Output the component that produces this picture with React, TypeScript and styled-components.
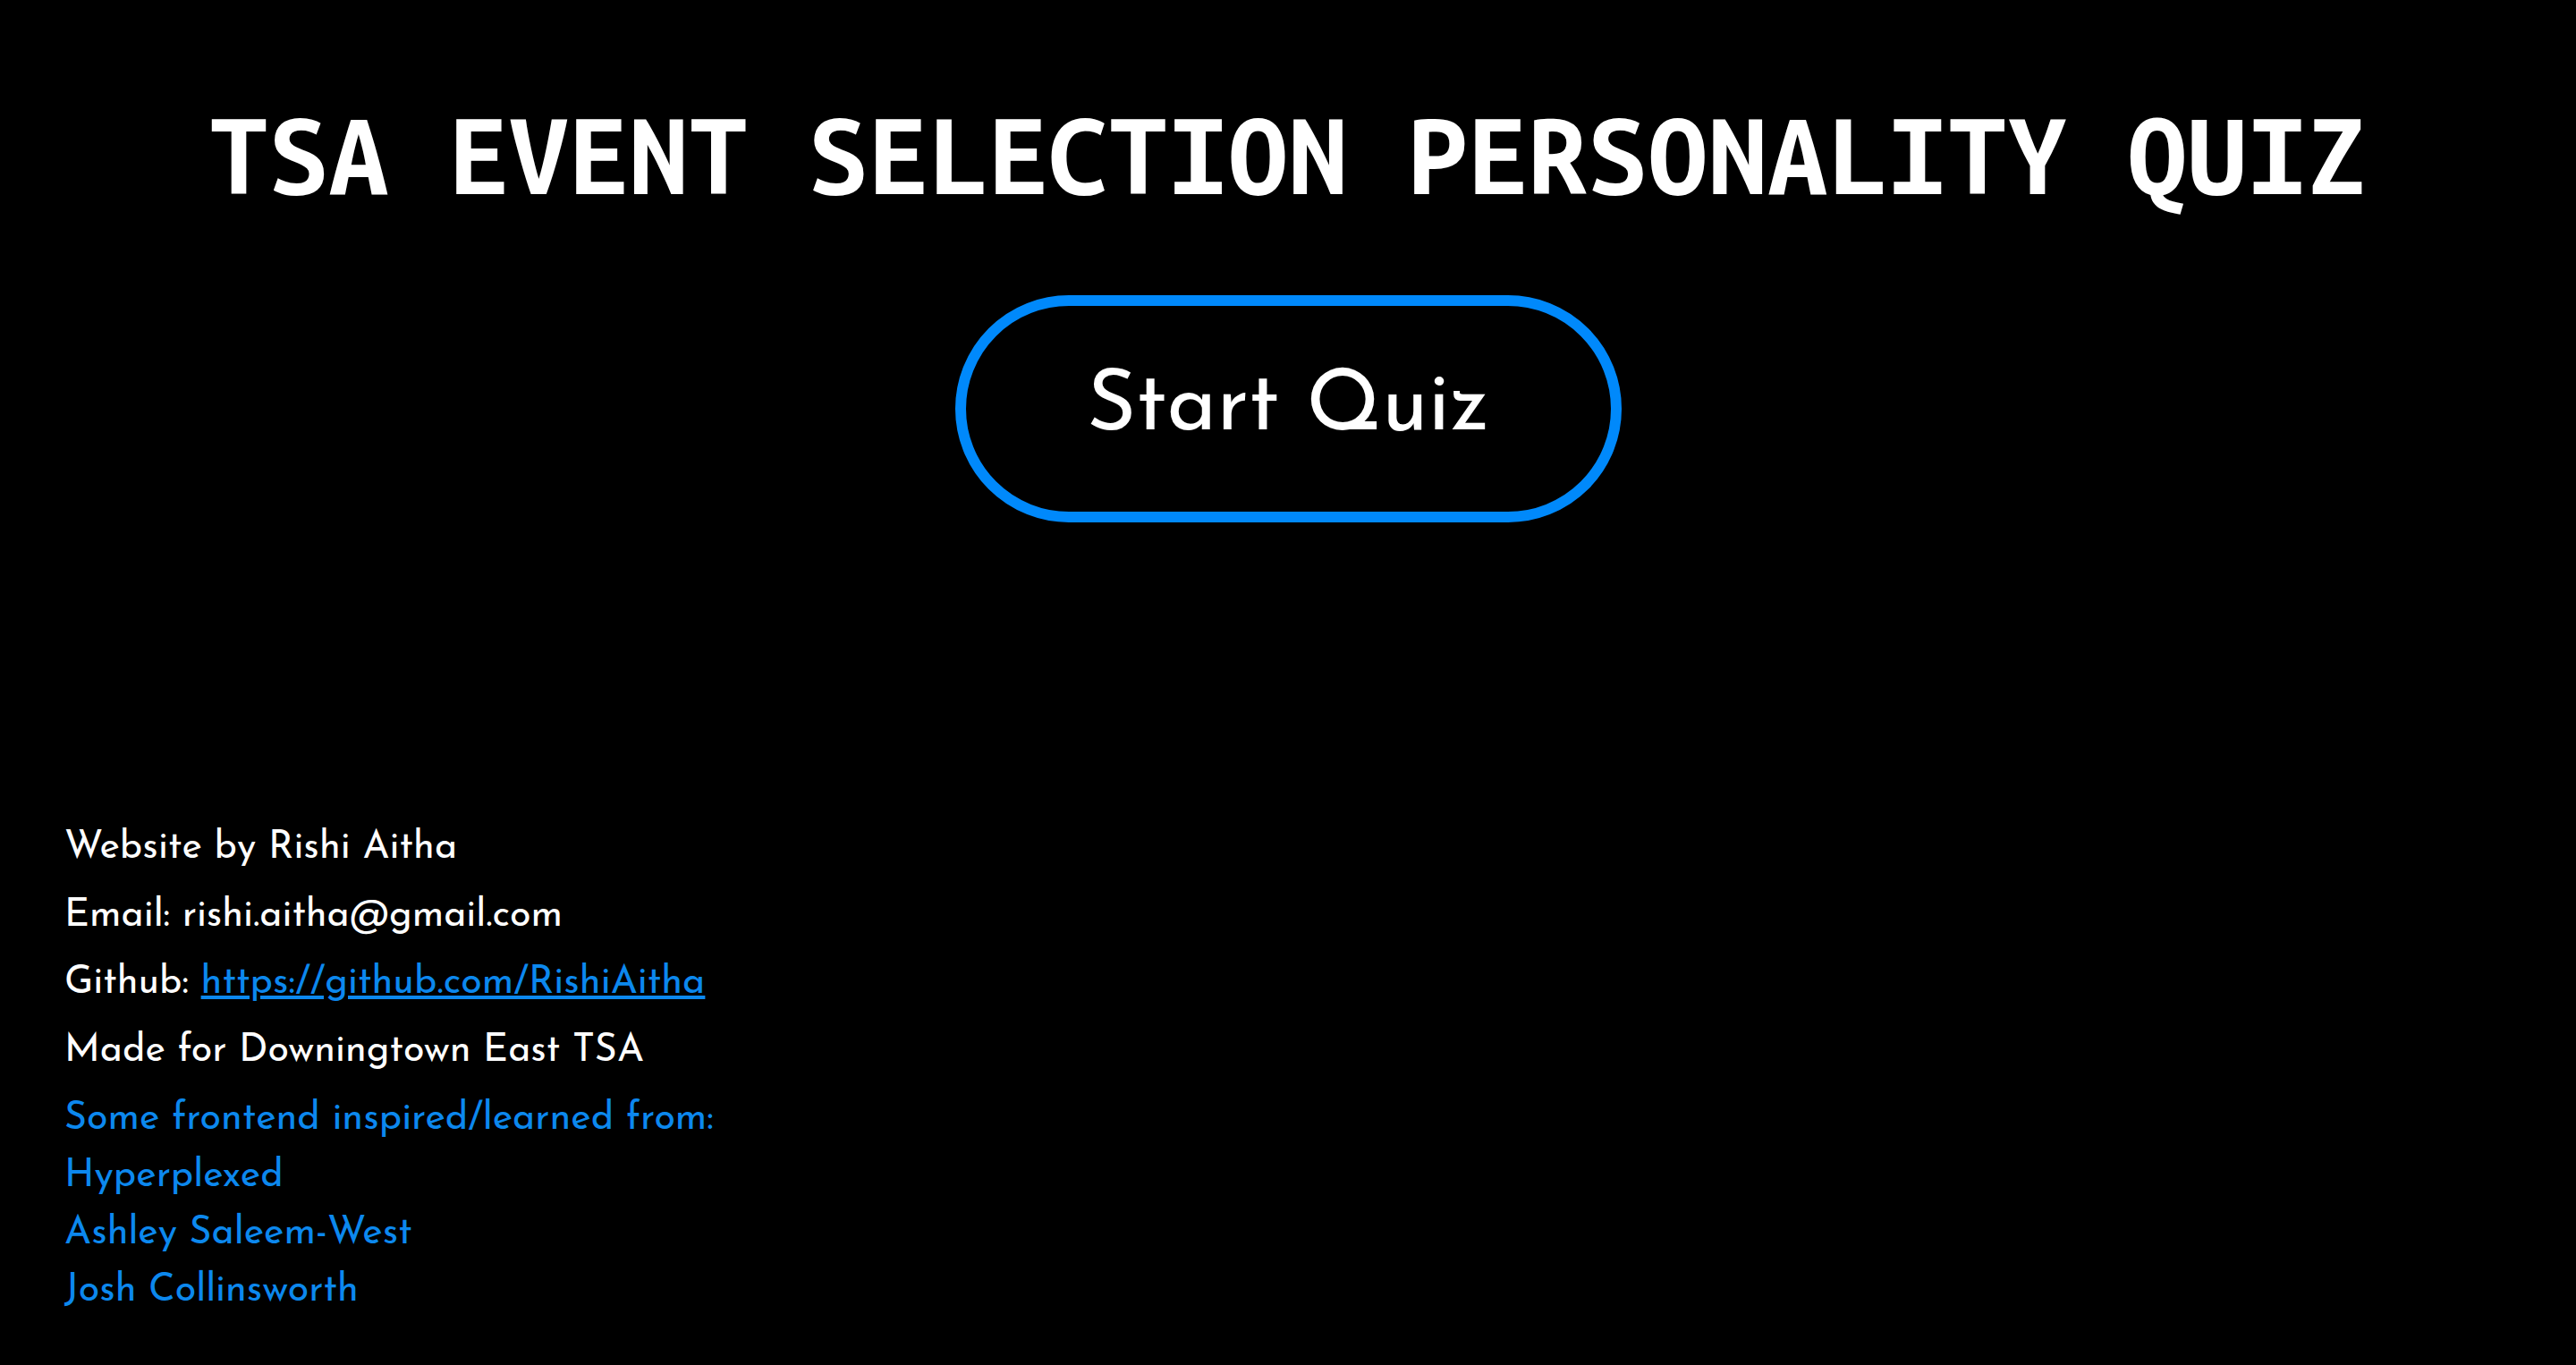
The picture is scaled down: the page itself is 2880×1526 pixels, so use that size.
import React from "react";
import styled, { createGlobalStyle } from "styled-components";

const GlobalStyle = createGlobalStyle`
  *, *::before, *::after { box-sizing: border-box; }
  body {
    margin: 0;
    background: #000;
    color: #fff;
    font-family: "Josefin Sans", Lato, sans-serif;
  }
`;

const Page = styled.main`
  display: flex;
  flex-direction: column;
  align-items: center;
  min-height: 1526px;
  overflow: hidden;
`;

const Title = styled.h1`
  margin: 101px 0 0;
  font-family: "Ubuntu Mono", "Noto Sans Mono", "DejaVu Sans Mono", monospace;
  font-size: 119.7px;
  font-weight: 700;
  line-height: 144px;
  white-space: nowrap;
`;

const StartButton = styled.button`
  display: flex;
  justify-content: center;
  align-items: center;
  width: 745px;
  height: 254px;
  margin-top: 85px;
  padding: 0;
  border: 12px solid #0089fb;
  border-radius: 127px;
  background: #000;
  color: #fff;
  font-family: inherit;
  font-size: 95.2px;
  line-height: 1;
  cursor: pointer;
`;

const Credits = styled.footer`
  display: flex;
  flex-direction: column;
  align-self: stretch;
  gap: 11.64px;
  margin-top: 333.1px;
  padding-left: 72px;
  font-size: 43px;
  line-height: 64px;
`;

const Line = styled.p<{ $accent?: boolean; $tracking?: number }>`
  margin: 0;
  white-space: nowrap;
  letter-spacing: ${(p) => (p.$tracking ? `${p.$tracking}px` : "normal")};
  color: ${(p) => (p.$accent ? "#0c88ee" : "#fff")};
`;

const Link = styled.a`
  color: #0c88ee;
  letter-spacing: 0.05px;
  text-decoration: underline;
`;

const sources = ["Hyperplexed", "Ashley Saleem-West", "Josh Collinsworth"];

export default function App() {
  return (
    <Page>
      <GlobalStyle />
      <Title>TSA EVENT SELECTION PERSONALITY QUIZ</Title>
      <StartButton>Start Quiz</StartButton>
      <Credits>
        <Line $tracking={0.06}>Website by Rishi Aitha</Line>
        <Line>Email: rishi.aitha@gmail.com</Line>
        <Line>
          Github: <Link href="#">https://github.com/RishiAitha</Link>
        </Line>
        <Line>Made for Downingtown East TSA</Line>
        <Line $accent>
          Some frontend inspired/learned from:
          {sources.map((name) => (
            <React.Fragment key={name}>
              <br />
              {name}
            </React.Fragment>
          ))}
        </Line>
      </Credits>
    </Page>
  );
}
